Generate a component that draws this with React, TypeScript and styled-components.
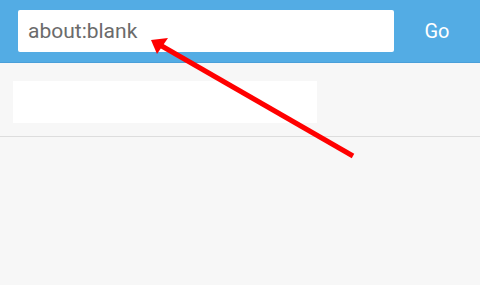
import React from "react";
import styled, { createGlobalStyle } from "styled-components";

const Global = createGlobalStyle`
  html, body { margin: 0; padding: 0; background: #f7f7f7; }
  body { font-family: Roboto, "Liberation Sans", sans-serif; }
`;

const Page = styled.div`
  position: relative;
  width: 480px;
  height: 285px;
  background: #f7f7f7;
  overflow: hidden;
`;

const Toolbar = styled.div`
  display: flex;
  align-items: center;
  height: 62px;
  padding-left: 18px;
  background: #53ace4;
  border-bottom: 1px solid #4a9fd9;
`;

const UrlField = styled.div`
  display: flex;
  align-items: center;
  width: 376px;
  height: 42px;
  box-sizing: border-box;
  padding-left: 10px;
  background: #ffffff;
  border-radius: 2px;
  color: #6b6b6b;
  font-size: 21px;
`;

const GoButton = styled.div`
  flex: 1;
  display: flex;
  align-items: center;
  justify-content: center;
  color: #ffffff;
  font-size: 20px;
`;

const Content = styled.div`
  padding: 18px 13px 13px;
  border-bottom: 1px solid #dddddd;
`;

const Card = styled.div`
  width: 304px;
  height: 42px;
  background: #ffffff;
`;

const Overlay = styled.svg`
  position: absolute;
  left: 0;
  top: 0;
  pointer-events: none;
`;

export default function App() {
  return (
    <Page>
      <Global />
      <Toolbar>
        <UrlField>about:blank</UrlField>
        <GoButton>Go</GoButton>
      </Toolbar>
      <Content>
        <Card />
      </Content>
      <Overlay width="480" height="285" viewBox="0 0 480 285">
        <line x1="353" y1="156" x2="160" y2="45" stroke="#ff0000" strokeWidth="5" />
        <polygon points="151,40 168,38 157,54" fill="#ff0000" />
      </Overlay>
    </Page>
  );
}
